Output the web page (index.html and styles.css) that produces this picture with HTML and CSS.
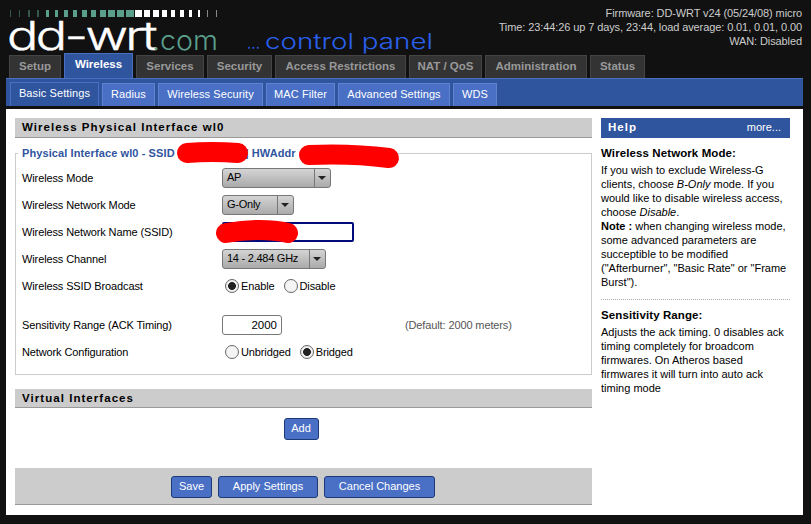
FILE: index.html
```html
<!DOCTYPE html>
<html lang="en">
<head>
<meta charset="UTF-8">
<meta name="viewport" content="width=device-width, initial-scale=1.0">
<title>DD-WRT Wireless</title>
<link rel="stylesheet" href="styles.css">
</head>
<body>

<div class="wrapper">
  <div class="header">
    <svg class="logo" width="440" height="55" viewBox="0 0 440 55">
      <g id="ticks"></g>
      <text x="7" y="50" class="logo-main" textLength="148" lengthAdjust="spacingAndGlyphs">dd-wrt</text>
      <text x="152" y="50" class="logo-com" textLength="66" lengthAdjust="spacingAndGlyphs">.com</text>
      <text x="247" y="49" class="logo-panel" textLength="13" lengthAdjust="spacingAndGlyphs">...</text>
      <text x="265" y="49" class="logo-panel" textLength="168" lengthAdjust="spacingAndGlyphs">control panel</text>
    </svg>
    <div class="info">
      <div>Firmware: DD-WRT v24 (05/24/08) micro</div>
      <div>Time: 23:44:26 up 7 days, 23:44, load average: 0.01, 0.01, 0.00</div>
      <div>WAN: Disabled</div>
    </div>
  </div>

  <div class="tabs">
    <a href="#" class="tab">Setup</a>
    <a href="#" class="tab active">Wireless</a>
    <a href="#" class="tab">Services</a>
    <a href="#" class="tab">Security</a>
    <a href="#" class="tab">Access Restrictions</a>
    <a href="#" class="tab">NAT / QoS</a>
    <a href="#" class="tab">Administration</a>
    <a href="#" class="tab">Status</a>
  </div>

  <div class="subtabs">
    <a href="#" class="subtab active">Basic Settings</a>
    <a href="#" class="subtab">Radius</a>
    <a href="#" class="subtab">Wireless Security</a>
    <a href="#" class="subtab">MAC Filter</a>
    <a href="#" class="subtab">Advanced Settings</a>
    <a href="#" class="subtab">WDS</a>
  </div>

  <div class="main">
    <div class="content">
      <h2 class="bar">Wireless Physical Interface wl0</h2>
      <div class="fieldset">
        <div class="legend">Physical Interface wl0 - SSID <span class="gap-a"></span>] HWAddr</div>

        <div class="row">
          <label>Wireless Mode</label>
          <div class="select w-mode"><span>AP</span><i></i></div>
        </div>
        <div class="row">
          <label>Wireless Network Mode</label>
          <div class="select w-net"><span>G-Only</span><i></i></div>
        </div>
        <div class="row">
          <label>Wireless Network Name (SSID)</label>
          <input type="text" class="text-ssid">
        </div>
        <div class="row">
          <label>Wireless Channel</label>
          <div class="select w-chan"><span>14 - 2.484 GHz</span><i></i></div>
        </div>
        <div class="row">
          <label>Wireless SSID Broadcast</label>
          <input type="radio" name="bc" checked><span class="opt">Enable</span>
          <input type="radio" name="bc"><span class="opt">Disable</span>
        </div>

        <div class="row spaced">
          <label>Sensitivity Range (ACK Timing)</label>
          <input type="text" class="text-ack" value="2000">
          <span class="default">(Default: 2000 meters)</span>
        </div>
        <div class="row">
          <label>Network Configuration</label>
          <input type="radio" name="net"><span class="opt">Unbridged</span>
          <input type="radio" name="net" checked><span class="opt">Bridged</span>
        </div>
      </div>

      <h2 class="bar virtual">Virtual Interfaces</h2>
      <div class="add-row"><button class="btn">Add</button></div>

      <div class="footer">
        <button class="btn save">Save</button>
        <button class="btn apply">Apply Settings</button>
        <button class="btn cancel">Cancel Changes</button>
      </div>
    </div>

    <div class="help">
      <div class="help-head"><b>Help</b><span>more...</span></div>
      <h3>Wireless Network Mode:</h3>
      <p>If you wish to exclude Wireless-G clients, choose <em>B-Only</em> mode. If you would like to disable wireless access, choose <em>Disable</em>.<br>
      <b>Note :</b> when changing wireless mode, some advanced parameters are succeptible to be modified ("Afterburner", "Basic Rate" or "Frame Burst").</p>
      <div class="sep"></div>
      <h3>Sensitivity Range:</h3>
      <p>Adjusts the ack timing. 0 disables ack timing completely for broadcom firmwares. On Atheros based firmwares it will turn into auto ack timing mode</p>
    </div>
  </div>
</div>

<!-- red scribbles painted over the screenshot -->
<svg class="scribble" width="811" height="524" viewBox="0 0 811 524">
  <path d="M187 153 Q212 151 238 153"/>
  <path d="M309 155 Q350 153 389 158"/>
  <path d="M226 233 Q262 227 288 233"/>
</svg>

<script>
    // Tick marks above the logo, thin to thick in green then back down in white
    var widths = [1,1,2,2,3,3,4,4,5,5,6,7,7,8, 7,6,6,5,4,4,3,2,1,1];
    var ticks = document.getElementById('ticks');
    widths.forEach(function(w, i) {
        var r = document.createElementNS('http://www.w3.org/2000/svg', 'rect');
        r.setAttribute('x', 10 + Math.round(i * 8.95));
        r.setAttribute('y', 10);
        r.setAttribute('width', w);
        r.setAttribute('height', 7);
        r.setAttribute('fill', i < 14 ? '#5a9f8c' : '#ffffff');
        if (i < 4) r.setAttribute('opacity', 0.5);
        if (i > 21) r.setAttribute('opacity', 0.5);
        ticks.appendChild(r);
    });
</script>

</body>
</html>
```

FILE: styles.css
```css
body {
    font-family: "Liberation Sans", Arial, sans-serif;
    font-size: 11px;
    margin: 0;
    padding: 0;
    background-color: #111;
    color: #000;
}
.wrapper {
    width: 797px;
    margin-left: 6px;
}
.header {
    height: 55px;
    display: flex;
    justify-content: space-between;
    margin-left: -6px;
}
.logo {
    flex: none;
}
.logo text {
    font-family: Inter, "Liberation Sans", sans-serif;
}
.logo-main {
    font-size: 39px;
    font-weight: 300;
    letter-spacing: -2px;
    fill: #fff;
    stroke: #fff;
    stroke-width: 0.4px;
}
.logo-com {
    font-size: 27px;
    font-weight: 300;
    fill: #5a9f8c;
}
.logo-panel {
    font-size: 22px;
    font-weight: 300;
    fill: #2a60ee;
}
.info {
    text-align: right;
    color: #ccc;
    line-height: 14px;
    letter-spacing: -0.1px;
    padding-top: 6px;
    padding-right: 1px;
}
.tabs {
    display: flex;
    align-items: flex-end;
    gap: 3px;
    height: 24px;
    margin-top: -1px;
    padding-left: 3px;
}
.tab {
    display: block;
    height: 23px;
    box-sizing: border-box;
    line-height: 21px;
    text-align: center;
    background-color: #333;
    border: 1px solid #444;
    border-bottom: none;
    color: #999;
    font-weight: bold;
    font-size: 11.5px;
    text-decoration: none;
}
.tab:nth-child(1) { width: 52px; }
.tab:nth-child(2) { width: 69px; }
.tab:nth-child(3) { width: 68px; }
.tab:nth-child(4) { width: 65px; }
.tab:nth-child(5) { width: 131px; }
.tab:nth-child(6) { width: 73px; }
.tab:nth-child(7) { width: 102px; }
.tab:nth-child(8) { width: 55px; }
.tab.active {
    height: 25px;
    background-color: #30559f;
    border-color: #4a6fc0;
    color: #fff;
    line-height: 20px;
}
.subtabs {
    display: flex;
    align-items: flex-end;
    gap: 3px;
    height: 28px;
    box-sizing: border-box;
    background-color: #30559f;
    border-top: 1px solid #4a6fc0;
    padding-left: 4px;
    margin-bottom: 3px;
}
.subtab {
    display: block;
    height: 23px;
    box-sizing: border-box;
    line-height: 20px;
    text-align: center;
    background-color: #4a70c6;
    border: 1px solid #5f83d0;
    border-bottom: none;
    color: #fff;
    font-size: 11px;
    letter-spacing: 0.1px;
    text-decoration: none;
}
.subtab:nth-child(1) { width: 89px; }
.subtab:nth-child(2) { width: 53px; }
.subtab:nth-child(3) { width: 105px; }
.subtab:nth-child(4) { width: 69px; }
.subtab:nth-child(5) { width: 112px; }
.subtab:nth-child(6) { width: 44px; }
.subtab.active {
    height: 24px;
    background-color: #30559f;
    border-color: #4a70c6;
    line-height: 20px;
}
.main {
    background-color: #fff;
    height: 406px;
    box-sizing: border-box;
    padding: 9px 13px 0 9px;
    display: flex;
    gap: 9px;
}
.content {
    width: 577px;
    flex: none;
    letter-spacing: -0.12px;
}
.bar {
    margin: 0;
    height: 20px;
    box-sizing: border-box;
    background-color: #ccc;
    border-bottom: 1px solid #999;
    padding-left: 7px;
    font-size: 11.5px;
    line-height: 18px;
    letter-spacing: 1.05px;
    font-weight: bold;
}
.fieldset {
    position: relative;
    margin-top: 15px;
    height: 222px;
    box-sizing: border-box;
    border: 1px solid #ccc;
    padding: 14px 6px 0;
}
.legend {
    position: absolute;
    top: -8px;
    left: 2px;
    padding: 0 4px;
    background-color: #fff;
    color: #30559f;
    font-weight: bold;
    line-height: 14px;
    letter-spacing: 0.1px;
}
.gap-a {
    display: inline-block;
    width: 67px;
}
.row {
    display: flex;
    align-items: center;
    height: 20px;
    margin-bottom: 7px;
}
.row label {
    width: 200px;
    flex: none;
}
.row.spaced {
    margin-top: 19px;
}
.select {
    display: flex;
    height: 20px;
    box-sizing: border-box;
    border: 1px solid #777;
    border-radius: 3px;
    background: linear-gradient(#d4d4d4, #aaa);
    letter-spacing: -0.25px;
}
.select span {
    flex: 1;
    padding-left: 4px;
    line-height: 16px;
    border-right: 1px solid #777;
}
.select i {
    display: block;
    width: 15px;
    flex: none;
    position: relative;
}
.select i::after {
    content: "";
    position: absolute;
    left: 3px;
    top: 7px;
    border: 4px solid transparent;
    border-top: 4px solid #222;
    border-bottom: none;
}
.w-mode { width: 109px; }
.w-net { width: 72px; }
.w-chan { width: 104px; }
input[type=text] {
    box-sizing: border-box;
    height: 20px;
    margin: 0;
    font-family: inherit;
    font-size: 11.5px;
    background-color: #fff;
    outline: none;
}
.text-ssid {
    width: 132px;
    border: 2px solid #000a78;
    border-radius: 2px;
}
.text-ack {
    width: 60px;
    border: 1px solid #777;
    border-radius: 3px;
    text-align: right;
    padding: 0 4px;
}
.default {
    margin-left: 123px;
    color: #555;
}
input[type=radio] {
    appearance: none;
    box-sizing: border-box;
    width: 14px;
    height: 14px;
    margin: 0 2px 0 3px;
    border: 1px solid #666;
    border-radius: 50%;
    background-color: #f4f4f4;
    flex: none;
}
input[type=radio]:checked {
    background: radial-gradient(circle, #222 0, #222 3.6px, #f0f0f0 4.2px);
}
.opt {
    margin-right: 6px;
}
.add-row {
    display: flex;
    justify-content: center;
    padding-top: 10px;
    padding-right: 5px;
    height: 50px;
}
.virtual {
    margin-top: 14px;
    height: 19px;
}
.btn {
    display: block;
    height: 22px;
    box-sizing: border-box;
    background-color: #4a70c6;
    border: 1px solid #1c3a78;
    border-radius: 3px;
    color: #fff;
    font-family: inherit;
    font-size: 11px;
    line-height: 17px;
    padding: 0 0 2px;
    width: 35px;
}
.footer {
    height: 37px;
    box-sizing: border-box;
    background-color: #ccc;
    border-bottom: 1px solid #999;
    display: flex;
    justify-content: center;
    gap: 6px;
    padding-top: 8px;
    padding-right: 1px;
}
.btn.save { width: 41px; }
.btn.apply { width: 100px; }
.btn.cancel { width: 111px; }
.help {
    width: 189px;
    flex: none;
    line-height: 14px;
}
.help-head {
    display: flex;
    justify-content: space-between;
    height: 20px;
    background-color: #30559f;
    color: #fff;
    line-height: 18px;
    padding: 0 9px 0 7px;
}
.help-head b {
    letter-spacing: 1px;
    font-size: 11.5px;
}
.help h3 {
    margin: 8px 0 3px;
    font-size: 11.5px;
    letter-spacing: 0.1px;
    line-height: 14px;
}
.help p {
    margin: 0;
}
.sep {
    border-top: 1px dotted #aaa;
    margin: 10px 0 8px;
}
.scribble {
    position: absolute;
    top: 0;
    left: 0;
    pointer-events: none;
}
.scribble path {
    fill: none;
    stroke: #ff0000;
    stroke-width: 20px;
    stroke-linecap: round;
}
```
